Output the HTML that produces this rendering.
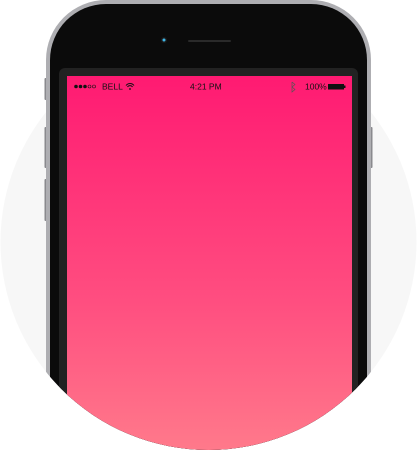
<!DOCTYPE html>
<html><head><style>
html,body{margin:0;padding:0;background:#fff;width:417px;height:452px;overflow:hidden}
svg{overflow:hidden}
</style></head><body>
<svg width="417" height="452" viewBox="0 0 417 452" xmlns="http://www.w3.org/2000/svg" style="display:block">
<defs>
<clipPath id="cl"><rect x="0" y="0" width="417" height="242"/><circle cx="208.5" cy="242" r="208"/></clipPath>
<linearGradient id="g" x1="0" y1="0" x2="0" y2="1">
<stop offset="0" stop-color="#ff1a72"/><stop offset="0.6" stop-color="#ff4e80"/><stop offset="1" stop-color="#ff7a8b"/></linearGradient>
</defs>
<circle cx="208.5" cy="242" r="208" fill="#f7f7f7"/>
<g clip-path="url(#cl)">
<rect x="44.5" y="78" width="3" height="22" rx="1" fill="#8a8a8e"/>
<rect x="44.5" y="127" width="3" height="41" rx="1" fill="#8a8a8e"/>
<rect x="44.5" y="179" width="3" height="42" rx="1" fill="#8a8a8e"/>
<rect x="369.5" y="127" width="3" height="41" rx="1" fill="#8a8a8e"/>
<path d="M46 452 V60 A60 60 0 0 1 106 0 H311 A60 60 0 0 1 371 60 V452 Z" fill="#aeaeb2"/>
<path d="M50 452 V60 A56 56 0 0 1 106 4 H311 A56 56 0 0 1 367 60 V452 Z" fill="#0b0b0b"/>
<path d="M59 452 V74 A6 6 0 0 1 65 68 H352 A6 6 0 0 1 358 74 V452 Z" fill="#222"/>
<rect x="67" y="76" width="285" height="376" fill="url(#g)"/>
<circle cx="164" cy="40" r="3" fill="#1a1a1a"/>
<circle cx="164" cy="40" r="1.5" fill="#3fb6e6"/>
<rect x="188" y="40" width="43" height="2" rx="1" fill="#2a2a2a"/>
</g>
<g font-family="Liberation Sans, sans-serif" font-size="8.5" fill="#111">
<circle cx="76" cy="86.5" r="1.8"/><circle cx="80.5" cy="86.5" r="1.8"/><circle cx="85" cy="86.5" r="1.8"/>
<circle cx="89.5" cy="86.5" r="1.5" fill="none" stroke="#111" stroke-width="0.6"/><circle cx="94" cy="86.5" r="1.5" fill="none" stroke="#111" stroke-width="0.6"/>
<text x="102" y="89.5">BELL</text>
<path d="M126 85.5 a5 5 0 0 1 8 0 M127.5 87 a3 3 0 0 1 5 0" stroke="#111" stroke-width="1" fill="none"/>
<circle cx="130" cy="89" r="0.9"/>
<text x="190" y="89.5">4:21 PM</text>
<path d="M292 83 l3 2.5 -3 2.5 v-5 v10 l3 -2.5 -3 -2.5" stroke="#555" stroke-width="0.7" fill="none" transform="translate(0,-1)"/>
<text x="305" y="89.5">100%</text>
<rect x="328" y="84" width="16" height="5.5" fill="#111"/>
<rect x="344" y="85.5" width="1.5" height="2.5" fill="#111"/>
</g>
</svg>
</body></html>
